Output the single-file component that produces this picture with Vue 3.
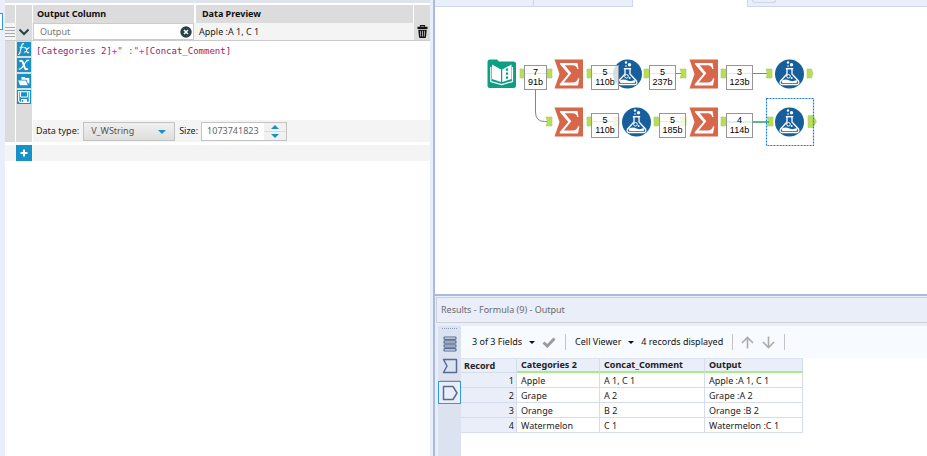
<script setup>
import { ref } from 'vue'

const outputName = ref('Output')
const dataType = ref('V_WString')
const size = ref('1073741823')

const fields = ['Categories 2', 'Concat_Comment', 'Output']
const records = [
  ['Apple', 'A 1, C 1', 'Apple :A 1, C 1'],
  ['Grape', 'A 2', 'Grape :A 2'],
  ['Orange', 'B 2', 'Orange :B 2'],
  ['Watermelon', 'C 1', 'Watermelon :C 1']
]

const tools = [
  { kind: 'input', x: 52, y: 52 },
  { kind: 'sum', x: 119, y: 52 },
  { kind: 'formula', x: 178, y: 52 },
  { kind: 'sum', x: 254, y: 52 },
  { kind: 'formula', x: 340, y: 52 },
  { kind: 'sum', x: 119, y: 100 },
  { kind: 'formula', x: 187, y: 100 },
  { kind: 'sum', x: 254, y: 100 },
  { kind: 'formula', x: 340, y: 100 }
]

const inPorts = [
  [111, 62], [179, 62], [245, 62], [331, 62],
  [111, 110], [178, 110], [245, 110], [332, 110]
]
const outPorts = [
  [85, 62], [152, 62], [209, 62], [286, 62], [372, 62],
  [152, 110], [219, 110], [286, 110]
]

const counts = [
  { rows: 7, bytes: '91b', x: 89, y: 58, w: 23 },
  { rows: 5, bytes: '110b', x: 156, y: 58, w: 28 },
  { rows: 5, bytes: '237b', x: 214, y: 58, w: 27 },
  { rows: 3, bytes: '123b', x: 291, y: 58, w: 27 },
  { rows: 5, bytes: '110b', x: 156, y: 106, w: 28 },
  { rows: 5, bytes: '185b', x: 224, y: 106, w: 27 },
  { rows: 4, bytes: '114b', x: 291, y: 106, w: 27 }
]
</script>

<template>
  <div class="app">
    <section class="config">
      <div class="rail"><span class="rail-tab"></span></div>
      <div class="config-body">
        <div class="grid">
          <div class="cell"></div>
          <div class="cell"></div>
          <div class="cell head">Output Column</div>
          <div class="cell head preview-head">Data Preview</div>
          <div class="cell"></div>
        </div>
        <div class="grid name-row">
          <div class="grip"><i></i><i></i><i></i><i></i></div>
          <button class="cell collapse" aria-label="Collapse">
            <svg width="12" height="8" viewBox="0 0 12 8"><path d="M1.5 1.5 6 6l4.500-4.500" fill="none" stroke="#27424a" stroke-width="2" /></svg>
          </button>
          <div class="name">
            <input v-model="outputName" aria-label="Output column name" />
            <button class="clear" aria-label="Clear">
              <svg width="12" height="12" viewBox="0 0 12 12"><circle cx="6" cy="6" r="5.700" fill="#27424a" /><path d="m4 4 4 4m0-4-4 4" stroke="#fff" stroke-width="1.500" /></svg>
            </button>
          </div>
          <div class="preview">Apple :A 1, C 1</div>
          <button class="cell trash" aria-label="Delete expression">
            <svg width="11" height="13" viewBox="0 0 11 13"><path d="M3.500 1.800V.6h4v1.200" fill="none" stroke="#111" stroke-width="1.200" /><path d="M.5 1.800h10v2.200H.5zM1.300 4.700h8.400L9 12q-.2 1-1 1H3q-.8 0-1-1z" fill="#111" /><path d="M3.400 5.800 3.700 11.500M5.500 5.800v5.700M7.600 5.800 7.300 11.500" stroke="#ccc" stroke-width=".8" /></svg>
          </button>
        </div>
        <div class="expression">
          <div class="cell"></div>
          <div class="cell tools">
            <button aria-label="Functions">
              <svg width="14" height="14" viewBox="0 0 14 14"><path d="M1 12.300q1.400.5 2-1.800L4.700 3.500Q5.200 1.300 7 1.700M2.700 5.300h4M7.300 6q1.300-1 1.800.5l1 3.500q.5 1.300 1.900.2M12.600 5.800Q11.300 5.300 10 7.500 8.500 10.600 7 10.200" fill="none" stroke="#fff" stroke-width="1.100" /></svg>
            </button>
            <button aria-label="Columns and constants">
              <svg width="14" height="14" viewBox="0 0 14 14"><path d="M2.500 3.300q2.300-1.300 3.300.8l2.100 6q.8 2 2.800.4" fill="none" stroke="#fff" stroke-width="2" /><path d="M12 2.500Q10.300 1.500 8 5 4.500 11.800 1.700 11" fill="none" stroke="#fff" stroke-width="1.300" /></svg>
            </button>
            <button aria-label="Open expression">
              <svg width="14" height="14" viewBox="0 0 14 14"><path d="M4.500 3h3l.8 1h4v5.500H11L9.500 5.800H4.500z" fill="#fff" /><path d="M1.200 6.500h7.600l2 4.700H3z" fill="#fff" /></svg>
            </button>
            <button aria-label="Save expression">
              <svg width="14" height="14" viewBox="0 0 14 14"><path d="M1.700 1.700h10.600v10.600H3L1.700 11z" fill="none" stroke="#fff" stroke-width="1.200" /><path d="M3.500 2v5h7V2" fill="none" stroke="#fff" /><path d="M4 9h6v3.500H4z" fill="#fff" /><path d="M5 10h1.200v2H5z" fill="#1791c6" /></svg>
            </button>
          </div>
          <div class="editor">
            <code><span class="col">[Categories 2]</span><span class="op">+</span><span class="str">" :"</span><span class="op">+</span><span class="col">[Concat_Comment]</span></code>
            <div class="type-bar">
              <label for="data-type">Data type:</label>
              <div class="select">
                <select id="data-type" v-model="dataType"><option>V_WString</option></select>
                <i class="caret"></i>
              </div>
              <label for="size">Size:</label>
              <div class="spin">
                <input id="size" v-model="size" />
                <div class="steps">
                  <button aria-label="Increase"><i class="up"></i></button>
                  <button aria-label="Decrease"><i class="caret"></i></button>
                </div>
              </div>
            </div>
          </div>
        </div>
        <div class="add-row">
          <button class="add" aria-label="Add expression">
            <svg width="8" height="8" viewBox="0 0 8 8"><path d="M4 .5v7M.5 4h7" stroke="#fff" stroke-width="2" /></svg>
          </button>
        </div>
      </div>
    </section>

    <main class="work">
      <div class="tabs">
        <span class="tab"></span>
        <span class="tab"></span>
        <span class="tab-open"></span>
        <span class="tab-rest"><span class="tab-add"></span></span>
      </div>

      <div class="canvas">
        <svg class="layer" width="400" height="150" viewBox="0 0 400 150">
          <g fill="none" stroke="#858585" stroke-width="1">
            <path d="M90 66.500h25M157 66.500h26M214 66.500h34M291 66.500h43M157 114.500h26M224 114.500h25" />
            <path d="M100.500 83v22q0 9.500 9 9.500h4" />
          </g>
          <g fill="#b9dc5c" stroke="#a9d24f" stroke-width=".6">
            <path v-for="(p, i) in inPorts" :key="'i' + i" :d="`M${p[0]} ${p[1]}h6v9h-6l1.500-4.500z`" />
            <path v-for="(p, i) in outPorts" :key="'o' + i" :d="`M${p[0]} ${p[1]}h4.500l1.500 4.500-1.500 4.500h-4.500z`" />
            <path d="M373 108.500h5l3.500 6-3.500 6h-5z" />
          </g>
          <path d="M291 115h43" stroke="#22a455" stroke-width="1.500" />
          <rect x="331.500" y="91.500" width="47" height="47" fill="none" stroke="#1f7fd6" stroke-width="1.200" stroke-dasharray="2 1" />
        </svg>

        <svg v-for="(t, i) in tools" :key="i" class="tool" :style="{ left: t.x + 'px', top: t.y + 'px' }" width="30" height="30" viewBox="0 0 30 30">
          <template v-if="t.kind === 'input'">
            <path d="M3 .5h7l2 2h14.500a2.500 2.500 0 0 1 2.500 2.500v21.500a2.500 2.500 0 0 1-2.500 2.500H3A2.500 2.500 0 0 1 .5 26.500V3A2.500 2.500 0 0 1 3 .5z" fill="#0c9e86" />
            <path d="M5 5.500 14 10.500v12.500L5 20zM24.500 5.500 15.200 10.500v12.500L24.500 20z" fill="#fff" />
            <path d="M3.800 8v14.500l10.800 3.200 10.900-3.200V8" fill="none" stroke="#fff" stroke-width="1.200" />
            <path d="M20 9.500v2.200M20 13.500v2.200M20 17.500v2.200" stroke="#0c9e86" stroke-width="2.200" />
          </template>
          <template v-else-if="t.kind === 'sum'">
            <path d="M.5.500h28.500v29H.5L5.500 15z" fill="#d7674b" />
            <path d="M6 4h17.500l1 6h-1.200q-1-3.700-4.500-3.700h-8l6.500 8-7.500 9.200h9q4 0 5.300-4.300h1.300L24 26.500H5.800v-1.400l8.500-10L6 5.300z" fill="#fff" />
          </template>
          <template v-else>
            <circle cx="14.500" cy="15" r="14.500" fill="#175f9c" />
            <path d="M12 10v5L5.500 22q-1.300 3.300 1.800 3.500h14.400q3.100-.2 1.800-3.500L17 15v-5" fill="none" stroke="#fff" stroke-width="1.300" stroke-linejoin="round" />
            <path d="M10.800 9.700h7.400" stroke="#fff" stroke-width="1.500" />
            <path d="M7.500 21q3.500-1.300 7 .4t7-.4l1 1.800q-.5 1.200-2 1.200h-12q-1.500 0-2-1.200z" fill="#fff" />
            <circle cx="13.500" cy="17.300" r="1.800" fill="none" stroke="#fff" />
            <circle cx="16.700" cy="19" r=".9" fill="#fff" />
            <circle cx="13" cy="3.500" r="1.200" fill="#fff" />
            <circle cx="16.500" cy="5.700" r="1.700" fill="#fff" />
            <circle cx="13" cy="7" r=".8" fill="#fff" />
          </template>
        </svg>

        <div v-for="(c, i) in counts" :key="'c' + i" class="count" :style="{ left: c.x + 'px', top: c.y + 'px', width: c.w + 'px' }">
          <span>{{ c.rows }}</span><span>{{ c.bytes }}</span>
        </div>
      </div>

      <section class="results">
        <h2>Results - Formula (9) - Output</h2>
        <div class="results-body">
          <nav class="side">
            <span class="dots"></span>
            <button aria-label="Messages">
              <svg width="14" height="16" viewBox="0 0 14 16"><g fill="none" stroke="#586c92" stroke-width="1.200"><rect x="1" y="1" width="12" height="2.300" rx=".8" /><rect x="1" y="4.900" width="12" height="2.300" rx=".8" /><rect x="1" y="8.800" width="12" height="2.300" rx=".8" /><rect x="1" y="12.700" width="12" height="2.300" rx=".8" /></g></svg>
            </button>
            <button aria-label="Input anchor">
              <svg width="16" height="16" viewBox="0 0 16 16"><path d="M1.500 1.500h13v13h-13L5 8z" fill="none" stroke="#586c92" stroke-width="1.500" stroke-linejoin="round" /></svg>
            </button>
            <hr />
            <button class="active" aria-label="Output anchor">
              <svg width="16" height="16" viewBox="0 0 16 16"><path d="M1.500 1.500h9.500l4 6.500-4 6.500H1.500z" fill="none" stroke="#586c92" stroke-width="1.500" stroke-linejoin="round" /></svg>
            </button>
          </nav>
          <div class="data">
            <div class="toolbar">
              <button class="drop">3 of 3 Fields<i class="mini"></i></button>
              <button class="check" aria-label="Apply">
                <svg width="14" height="11" viewBox="0 0 14 11"><path d="m1.500 5.500 3.800 3.500L12.500 1.500" fill="none" stroke="#9b9b9b" stroke-width="3" /></svg>
              </button>
              <i class="bar"></i>
              <button class="drop viewer">Cell Viewer<i class="mini"></i></button>
              <span class="shown">4 records displayed</span>
              <i class="bar"></i>
              <button class="arrow" aria-label="Previous"><svg width="13" height="13" viewBox="0 0 13 13"><path d="M6.500 12.500V1.500M1 7l5.500-5.500L12 7" fill="none" stroke="#ababab" stroke-width="1.600" /></svg></button>
              <button class="arrow" aria-label="Next"><svg width="13" height="13" viewBox="0 0 13 13"><path d="M6.500.5v11M1 6l5.500 5.500L12 6" fill="none" stroke="#ababab" stroke-width="1.600" /></svg></button>
              <i class="bar"></i>
            </div>
            <table>
              <colgroup><col class="w-rec" /><col class="w-cat" /><col class="w-con" /><col class="w-out" /></colgroup>
              <thead>
                <tr><th class="rec">Record</th><th v-for="f in fields" :key="f">{{ f }}</th></tr>
              </thead>
              <tbody>
                <tr v-for="(r, i) in records" :key="i">
                  <td class="rec">{{ i + 1 }}</td>
                  <td v-for="(v, j) in r" :key="j">{{ v }}</td>
                </tr>
              </tbody>
            </table>
          </div>
        </div>
      </section>
    </main>
  </div>
</template>

<style>
body { margin: 0; background: #fff; }
</style>

<style scoped>
* { box-sizing: border-box; }
.app { display: grid; grid-template-columns: 435fr 492fr; min-height: 100vh; font: 9px/14px "Noto Sans", "Open Sans", sans-serif; color: #222; }
button, input, select { font: inherit; color: inherit; border: 0; padding: 0; margin: 0; background: none; border-radius: 0; outline: 0; }
button { display: flex; align-items: center; justify-content: center; }
svg { display: block; flex: none; }

.config { min-width: 0; display: flex; border-right: 2px solid #a9badf; background: #e9eefa; padding-right: 3px; }
.rail { width: 5px; flex: none; padding-top: 13px; }
.rail-tab { display: block; width: 3px; height: 17px; border: 1px solid #3298e0; border-left: 0; background: #fff; }
.config-body { flex: 1; min-width: 0; background: #fff; border-top: 3px solid #dfe3ec; padding-top: 2px; }
.grid { display: grid; grid-template-columns: 10px 16px 161px 1fr 16px; column-gap: 1px; height: 17px; margin-bottom: 1px; }
.cell { background: #dcdcdc; }
.head { font-weight: 700; color: #111; line-height: 18px; padding-left: 4px; }
.preview-head { padding-left: 6px; margin-left: 1px; }
.name-row { background: #f4f4f4; border-bottom: 1px solid #ccc; height: 18px; margin-bottom: 0; }
.grip { display: flex; flex-direction: column; justify-content: center; gap: 2px; }
.grip i { height: 1px; background: #aaa; }
.name { display: flex; align-items: center; background: #fff; border: 1px solid #ccc; padding-right: 1px; }
.name input { flex: 1; min-width: 0; width: 0; padding-left: 6px; color: #777; height: 14px; }
.preview { line-height: 17px; padding-left: 4px; }
.expression { display: grid; grid-template-columns: 10px 16px 1fr; column-gap: 1px; height: 101px; }
.tools { display: flex; flex-direction: column; align-items: center; gap: 2px; padding-top: 1px; }
.tools button { width: 14px; height: 14px; background: #1791c6; }
.editor { display: flex; flex-direction: column; justify-content: space-between; }
code { font: 9px/14px "DejaVu Sans Mono", monospace; padding: 3px 3px; white-space: pre; }
.col { color: #98216b; }
.op { color: #f0f; }
.str { color: #128080; }
.type-bar { display: flex; align-items: center; height: 22px; background: #f4f4f4; padding-left: 3px; }
.select { position: relative; display: flex; width: 92px; height: 19px; margin: 0 4px; border: 1px solid #c2c2c2; background: linear-gradient(#f0f0f0, #dedede); }
.select select { appearance: none; width: 100%; padding-left: 7px; color: #555; }
.select .caret { position: absolute; right: 8px; top: 7px; }
.caret { width: 0; height: 0; border: 4px solid transparent; border-top-color: #1791c6; border-bottom: 0; }
.up { width: 0; height: 0; border: 4px solid transparent; border-bottom-color: #1791c6; border-top: 0; }
.spin { display: flex; width: 86px; height: 19px; margin-left: 3px; border: 1px solid #c2c2c2; background: #fff; }
.spin input { flex: 1; width: 0; min-width: 0; padding-left: 5px; color: #666; }
.steps { width: 22px; background: #dcdcdc; display: grid; grid-template-rows: 1fr 1fr; row-gap: 1px; }
.steps button { background: #f1f1f1; }
.add-row { background: #f4f4f4; height: 16px; margin-top: 3px; padding-left: 11px; }
.add { width: 16px; height: 16px; background: #1791c6; }

.work { min-width: 0; display: flex; flex-direction: column; }
.tabs { display: flex; height: 7px; }
.tab, .tab-rest { background: #e9eef9; border-bottom: 1px solid #cdd7ea; }
.tab { width: 99px; border-right: 1px solid #cdd7ea; }
.tab-open { width: 114px; }
.tab-rest { flex: 1; border-left: 1px solid #cdd7ea; padding-left: 4px; }
.tab-add { display: block; width: 24px; height: 3px; border: 1px solid #cdd7ea; border-top: 0; border-radius: 0 0 3px 3px; }
.canvas { position: relative; flex: 1; min-height: 150px; overflow: hidden; }
.layer { position: absolute; left: 0; top: 0; }
.tool, .count { position: absolute; }
.count { height: 25px; border: 1px solid #969696; background: rgba(255, 255, 255, .8); display: flex; flex-direction: column; align-items: center; padding-top: 1px; font: 9px/10px "Liberation Sans", sans-serif; color: #000; }

.results { border-top: 2px solid #a9badf; background: #e9eef9; height: 162px; display: flex; flex-direction: column; }
h2 { margin: 1px 0 0 1px; height: 26px; padding-left: 4px; font-size: 9px; font-weight: 400; line-height: 24px; color: #6b6b6b; border: 1px solid #cdd0d8; border-right: 0; }
.results-body { flex: 1; display: flex; margin-top: 3px; padding-left: 3px; }
.side { width: 23px; flex: none; background: #dbe2f0; display: flex; flex-direction: column; align-items: center; }
.dots { width: 15px; margin: 2px 0 7px; border-top: 1px dotted #8f9ab3; }
.side button { width: 23px; height: 16px; margin-bottom: 6px; }
.side hr { width: 20px; margin: 0; border: 0; border-top: 1px solid #c2cadc; }
.side button.active { height: 23px; border: 1px solid #2f96e8; background: #e9eef9; }
.data { flex: 1; min-width: 0; background: #fff; }
.toolbar { display: flex; align-items: center; height: 32px; padding-left: 11px; background: #f7faff; color: #111; white-space: nowrap; }
.drop { gap: 7px; }
.mini { width: 0; height: 0; border: 3px solid transparent; border-top-color: #111; border-bottom: 0; }
.check { margin: 0 9px 0 7px; }
.bar { width: 1px; height: 16px; background: #c4c4c4; }
.viewer { margin-left: 9px; }
.shown { margin: 0 9px 0 7px; }
.arrow { margin-left: 8px; }
.arrow + .bar { margin-left: 9px; }
table { border-collapse: separate; border-spacing: 0; table-layout: fixed; width: 342px; border-top: 1px solid #dbe2f0; }
.w-rec { width: 56px; } .w-cat { width: 83px; } .w-con { width: 105px; } .w-out { width: 98px; }
th, td { height: 15px; padding: 0 4px; text-align: left; line-height: 13px; border-right: 1px solid #d5dcec; border-bottom: 1px solid #d5dcec; white-space: nowrap; }
th { height: 14px; line-height: 12px; background: #e9eef9; border-bottom: 2px solid #a5ec8d; }
.rec { background: #e9eef9; }
th.rec { border-bottom: 1px solid #d5dcec; padding-left: 3px; }
td.rec { text-align: right; padding-right: 2px; }
</style>
